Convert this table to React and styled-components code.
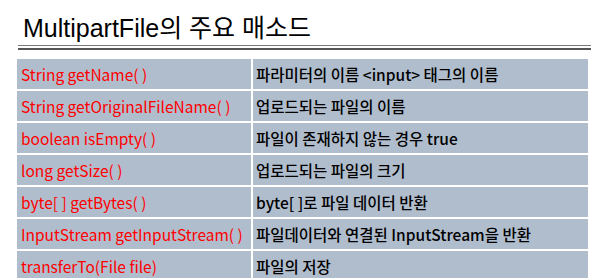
import { Fragment } from 'react'
import styled, { createGlobalStyle } from 'styled-components'

const GlobalStyle = createGlobalStyle`
  body {
    margin: 0;
    background: #fff;
  }
`

const Page = styled.div`
  width: 599px;
  height: 278px;
  overflow: hidden;
  padding: 14px 0 0 17px;
  box-sizing: border-box;
`

const Title = styled.h1`
  margin: 0 0 0 6px;
  font-family: 'Liberation Sans', 'Noto Sans CJK KR', sans-serif;
  font-weight: normal;
  font-size: 25px;
  line-height: 29px;
  color: #000;
`

const Rule = styled.div`
  width: 573px;
  height: 1px;
  margin: 2px 0 0 1px;
  background: #7a7a7a;
  border-bottom: 1px solid #fff;
  box-shadow: 0 3px 0 0 #555;
`

const Table = styled.div`
  display: grid;
  grid-template-columns: 234px 335px;
  grid-auto-rows: 30px;
  gap: 2px;
  margin-top: 12px;
`

const Cell = styled.div`
  background: #b0bdcd;
  display: flex;
  align-items: center;
  padding: 0 0 1px ${(p) => (p.$method ? '4px' : '3px')};
  font-family: 'Noto Sans CJK KR', 'Noto Sans', sans-serif;
  font-size: 15.5px;
  font-weight: ${(p) => (p.$method ? 400 : 500)};
  color: ${(p) => (p.$method ? '#ff0000' : '#000')};
  white-space: nowrap;
`

const methods = [
  ['String getName( )', '파라미터의 이름 <input> 태그의 이름'],
  ['String getOriginalFileName( )', '업로드되는 파일의 이름'],
  ['boolean isEmpty( )', '파일이 존재하지 않는 경우 true'],
  ['long getSize( )', '업로드되는 파일의 크기'],
  ['byte[ ] getBytes( )', 'byte[ ]로 파일 데이터 반환'],
  ['InputStream getInputStream( )', '파일데이터와 연결된 InputStream을 반환'],
  ['transferTo(File file)', '파일의 저장'],
]

export default function App() {
  return (
    <>
      <GlobalStyle />
      <Page>
        <Title>MultipartFile의 주요 매소드</Title>
        <Rule />
        <Table>
          {methods.map(([name, desc]) => (
            <Fragment key={name}>
              <Cell $method>{name}</Cell>
              <Cell>{desc}</Cell>
            </Fragment>
          ))}
        </Table>
      </Page>
    </>
  )
}
